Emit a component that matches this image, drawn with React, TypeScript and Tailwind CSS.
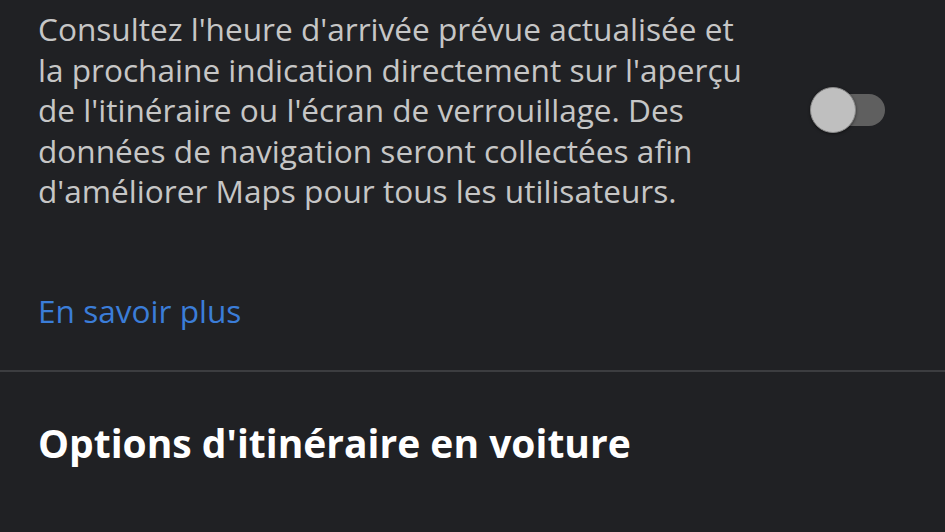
import React from "react";

export default function App() {
  return (
    <div
      className="w-[945px] h-[532px] overflow-hidden bg-[#202124]"
      style={{ fontFamily: "'Open Sans', Roboto, sans-serif" }}
    >
      <div className="flex items-start pl-[38px] pt-[9px]">
        <p className="text-[31.6px] leading-[40.5px] text-[#c6c6c6] w-[760px] whitespace-nowrap">
          Consultez l'heure d'arrivée prévue actualisée et
          <br />
          la prochaine indication directement sur l'aperçu
          <br />
          de l'itinéraire ou l'écran de verrouillage. Des
          <br />
          données de navigation seront collectées afin
          <br />
          d'améliorer Maps pour tous les utilisateurs.
        </p>
        <div className="ml-[12px] mt-[78px] relative w-[75px] h-[46px] flex items-center">
          <div className="absolute left-[10px] right-0 h-[32px] rounded-full bg-[#5f5f5f]" />
          <div className="absolute left-0 w-[46px] h-[46px] rounded-full bg-[#bfbfbf] border border-[#8a8a8a] shadow-[0_1px_3px_rgba(0,0,0,0.5)]" />
        </div>
      </div>
      <div className="pl-[38px] mt-[79px]">
        <a className="text-[31.6px] leading-[40.5px] text-[#3b7dd8]">En savoir plus</a>
      </div>
      <div className="mt-[39px] h-[2px] bg-[#3c3d40]" />
      <h2 className="pl-[38px] mt-[46px] text-[39px] leading-[50px] font-bold text-white whitespace-nowrap">
        Options d'itinéraire en voiture
      </h2>
    </div>
  );
}
